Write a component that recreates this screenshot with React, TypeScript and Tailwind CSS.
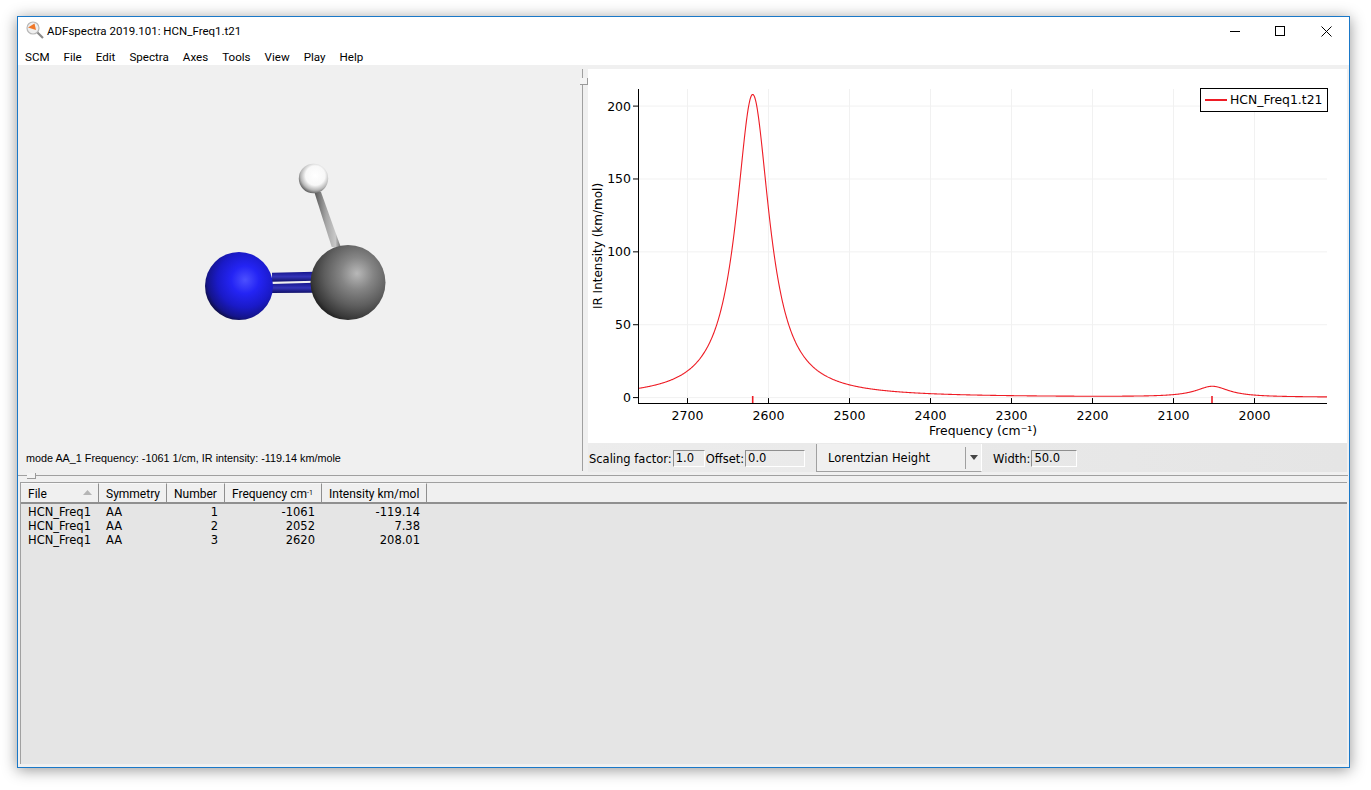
import React from "react";

const xOf = (f: number) => 687.5 + (2700 - f) * 0.81;
const yOf = (v: number) => 397.6 - v * 1.4575;
const lor = (f: number) => {
  const l = (c: number, h: number) => h / (1 + ((f - c) / 25) ** 2);
  return l(2619.5, 208.01) + l(2052, 7.38);
};
const curve = (() => {
  const pts: string[] = [];
  for (let px = 639; px <= 1327; px += 0.5) {
    const f = 2700 - (px - 687.5) / 0.81;
    pts.push(`${px},${yOf(lor(f)).toFixed(2)}`);
  }
  return "M" + pts.join("L");
})();

const xTicks = [2700, 2600, 2500, 2400, 2300, 2200, 2100, 2000];
const yTicks = [0, 50, 100, 150, 200];
// plot svg origin is at page (588, 69)
const ox = 588;
const oy = 69;

function Plot() {
  return (
    <svg width="759" height="374" className="block" style={{ fontFamily: '"DejaVu Sans", sans-serif' }}>
      {xTicks.map((t) => (
        <g key={t}>
          <line x1={xOf(t) - ox} x2={xOf(t) - ox} y1={89 - oy} y2={403 - oy} stroke="#f1f1f1" />
          <line x1={xOf(t) - ox} x2={xOf(t) - ox} y1={398 - oy} y2={403 - oy} stroke="#000" />
          <text x={xOf(t) - ox} y={420 - oy} fontSize="12.5" textAnchor="middle" fill="#000">{t}</text>
        </g>
      ))}
      {yTicks.map((t) => (
        <g key={t}>
          <line x1={638 - ox} x2={1327 - ox} y1={yOf(t) - oy} y2={yOf(t) - oy} stroke="#f1f1f1" />
          <line x1={633 - ox} x2={638 - ox} y1={yOf(t) - oy} y2={yOf(t) - oy} stroke="#000" />
          <text x={631 - ox} y={yOf(t) - oy + 4.5} fontSize="12.5" textAnchor="end" fill="#000">{t}</text>
        </g>
      ))}
      <line x1={638.5 - ox} x2={638.5 - ox} y1={89 - oy} y2={404 - oy} stroke="#000" />
      <line x1={638 - ox} x2={1327 - ox} y1={403.5 - oy} y2={403.5 - oy} stroke="#000" />
      <path d={curve} transform={`translate(${-ox} ${-oy})`} fill="none" stroke="#ee1c25" strokeWidth="1.1" />
      <line x1={752.7 - ox} x2={752.7 - ox} y1={396 - oy} y2={403 - oy} stroke="#ee1c25" strokeWidth="1.6" />
      <line x1={1212 - ox} x2={1212 - ox} y1={396 - oy} y2={403 - oy} stroke="#ee1c25" strokeWidth="1.6" />
      <text x={983 - ox} y={435 - oy} fontSize="12.4" textAnchor="middle" fill="#000">Frequency (cm⁻¹)</text>
      <text transform={`translate(${602 - ox} ${246 - oy}) rotate(-90)`} fontSize="12" textAnchor="middle" fill="#000">IR Intensity (km/mol)</text>
    </svg>
  );
}

function Molecule() {
  return (
    <svg width="230" height="190" className="block">
      <defs>
        <radialGradient id="gh" cx="0.56" cy="0.4" r="0.66">
          <stop offset="0" stopColor="#ffffff" />
          <stop offset="0.5" stopColor="#f8f8f8" />
          <stop offset="0.75" stopColor="#b8b8b8" />
          <stop offset="1" stopColor="#3c3c3c" />
        </radialGradient>
        <radialGradient id="gn" cx="0.59" cy="0.41" r="0.68">
          <stop offset="0" stopColor="#4c50ff" />
          <stop offset="0.3" stopColor="#2424f4" />
          <stop offset="0.6" stopColor="#1a1ac8" />
          <stop offset="0.82" stopColor="#14148a" />
          <stop offset="1" stopColor="#080810" />
        </radialGradient>
        <radialGradient id="gc" cx="0.62" cy="0.38" r="0.72">
          <stop offset="0" stopColor="#b8b8b8" />
          <stop offset="0.3" stopColor="#858585" />
          <stop offset="0.6" stopColor="#5e5e5e" />
          <stop offset="0.84" stopColor="#383838" />
          <stop offset="1" stopColor="#0c0c0c" />
        </radialGradient>
        <linearGradient id="gb" x1="0" y1="0" x2="1" y2="0">
          <stop offset="0" stopColor="#555555" />
          <stop offset="0.45" stopColor="#a6a6a6" />
          <stop offset="0.8" stopColor="#c8c8c8" />
          <stop offset="1" stopColor="#6a6a6a" />
        </linearGradient>
        <linearGradient id="gbl" x1="0" y1="0" x2="0" y2="1">
          <stop offset="0" stopColor="#14148c" />
          <stop offset="0.5" stopColor="#3434b8" />
          <stop offset="1" stopColor="#101068" />
        </linearGradient>
      </defs>
      {/* C-H bond */}
      <polygon points="134.3,42 141,42 160.7,97 151.7,97" fill="url(#gb)" />
      {/* double bond pair */}
      <polygon points="92,122.7 135,121.7 135,130.7 92,131.7" fill="url(#gbl)" />
      <polygon points="92,134 135,132.7 135,142.7 92,143" fill="url(#gbl)" />
      <circle cx="59" cy="136" r="34" fill="url(#gn)" />
      <circle cx="168" cy="132.5" r="37.5" fill="url(#gc)" />
      <circle cx="133.5" cy="28.5" r="14.7" fill="url(#gh)" />
    </svg>
  );
}

function Header({ w, children, sort }: { w: string; children: React.ReactNode; sort?: boolean }) {
  return (
    <div className={`${w} relative flex h-[19px] items-center border-r border-r-[#8f8f8f] border-t border-t-[#f8f8f8] bg-[#f0f0f0] pl-[7px] pt-[2px] text-[12px] text-black`}>
      {children}
      {sort && (
        <svg width="9" height="5" className="absolute right-[6px] top-[6px]">
          <polygon points="4.5,0 9,5 0,5" fill="#b5b5b5" />
        </svg>
      )}
    </div>
  );
}

const rows = [
  ["1", "-1061", "-119.14"],
  ["2", "2052", "7.38"],
  ["3", "2620", "208.01"],
];

const dejavu = { fontFamily: '"DejaVu Sans", sans-serif' };
const box = "ml-[1px] flex h-[17px] items-center border border-t-[#8f8f8f] border-l-[#8f8f8f] border-b-white border-r-white pl-[2px] pt-[2px]";

export default function App() {
  return (
    <div className="h-[790px] w-[1371px] overflow-hidden bg-white pl-[17px] pt-[16px]" style={{ fontFamily: 'Roboto, "Noto Sans", sans-serif' }}>
      <div className="flex h-[752px] w-[1333px] flex-col border border-[#1a78c8] bg-[#f0f0f0] shadow-[0_2px_14px_rgba(0,0,0,0.42)]">
        {/* title bar */}
        <div className="flex h-[28px] shrink-0 items-center bg-white">
          <svg width="20" height="20" viewBox="0 0 20 20" className="ml-[7px] mt-[-2px]">
            <circle cx="8" cy="8" r="6" fill="#efefef" stroke="#b8b8b8" strokeWidth="1.2" />
            <path d="M3 7.5 L9.5 3.5 L11 10 Z" fill="#f0782a" />
            <line x1="12.5" y1="12.5" x2="18" y2="18" stroke="#8a8a8a" strokeWidth="2.2" />
          </svg>
          <span className="ml-[2px] mt-[2px] text-[11.5px] text-black">ADFspectra 2019.101: HCN_Freq1.t21</span>
          <div className="ml-auto flex items-center">
            <svg width="11" height="11" className="mr-[34px]"><line x1="0" x2="10" y1="5.5" y2="5.5" stroke="#000" /></svg>
            <svg width="11" height="11" className="mr-[35px]"><rect x="0.5" y="0.5" width="9" height="9" fill="none" stroke="#000" /></svg>
            <svg width="11" height="11" className="mr-[17px]"><path d="M0.5 0.5L10.5 10.5M10.5 0.5L0.5 10.5" stroke="#000" /></svg>
          </div>
        </div>
        {/* menu */}
        <div className="flex h-[20px] shrink-0 items-center gap-[14px] bg-white pl-[7px] pt-[6px] text-[11.6px] text-black">
          {["SCM", "File", "Edit", "Spectra", "Axes", "Tools", "View", "Play", "Help"].map((m) => (
            <span key={m}>{m}</span>
          ))}
        </div>
        {/* top panes */}
        <div className="flex h-[409px] shrink-0">
          <div className="flex w-[564px] shrink-0 flex-col bg-[#f0f0f0]">
            <div className="ml-[162px] mt-[85px]"><Molecule /></div>
            <div className="mt-auto pb-[8px] pl-[8px] text-[10.8px] text-black" style={{ fontFamily: '"Liberation Sans", sans-serif' }}>
              mode AA_1 Frequency: -1061 1/cm, IR intensity: -119.14 km/mole
            </div>
          </div>
          {/* vertical splitter */}
          <div className="relative w-[6px] shrink-0 bg-[#f0f0f0]">
            <div className="mt-[4px] h-[402px] w-[1px] bg-[#a0a0a0]" />
            <div className="absolute left-[-2px] top-[13px] h-[7px] w-[8px] border-b border-r border-[#9a9a9a] bg-[#f4f4f4]" />
          </div>
          <div className="mt-[4px] flex w-[759px] shrink-0 flex-col">
            <div className="relative h-[374px] bg-white">
              <Plot />
              <div className="absolute left-[612px] top-[19px] flex h-[24px] w-[128px] items-center border border-black bg-white pl-[4px] text-[12.4px] text-black" style={dejavu}>
                <span className="mr-[3px] h-[1.5px] w-[22px] bg-[#ee1c25]" />
                HCN_Freq1.t21
              </div>
            </div>
            <div className="flex h-[29px] items-center bg-gradient-to-r from-[#ececec] to-[#e5e5e5] pt-[1px] text-[11.5px] text-black" style={dejavu}>
              <span className="ml-[1px] pt-[3px]">Scaling factor:</span>
              <div className={`${box} w-[32px]`}>1.0</div>
              <span className="ml-[1px] pt-[3px]">Offset:</span>
              <div className={`${box} w-[60px]`}>0.0</div>
              <div className="ml-[11px] mt-[-1px] flex h-[28px] w-[166px] items-center border-b border-l border-r border-b-[#a0a0a0] border-l-[#a0a0a0] border-r-white bg-[#f0f0f0] pl-[11px] pt-[4px]">
                Lorentzian Height
                <div className="ml-auto mt-[-3px] flex h-[22px] w-[16px] items-center justify-center border-l border-[#a0a0a0]">
                  <svg width="8" height="5"><polygon points="0,0 8,0 4,5" fill="#444" /></svg>
                </div>
              </div>
              <span className="ml-[11px] pt-[3px]">Width:</span>
              <div className={`${box} w-[46px]`}>50.0</div>
            </div>
          </div>
        </div>
        {/* horizontal splitter */}
        <div className="relative h-[8px] shrink-0 bg-[#f0f0f0]">
          <div className="mt-[1px] mr-[1px] h-[1px] bg-[#a0a0a0]" />
          <div className="absolute left-[9px] top-[-1px] h-[6px] w-[9px] border-b border-r border-[#9a9a9a] bg-[#f4f4f4]" />
        </div>
        {/* table */}
        <div className="mb-[3px] ml-[2px] mr-[2px] flex min-h-0 flex-1 flex-col border-l border-t border-[#a0a0a0] bg-[#e5e5e5]">
          <div className="flex shrink-0 border-b-2 border-[#8f8f8f] bg-[#f0f0f0]">
            <Header w="w-[78px]" sort>File</Header>
            <Header w="w-[68px]">Symmetry</Header>
            <Header w="w-[58px]">Number</Header>
            <Header w="w-[97px]"><span>Frequency cm<sup className="text-[7px]">-1</sup></span></Header>
            <Header w="w-[105px]">Intensity km/mol</Header>
          </div>
          <div className="pt-[1px] text-[11.5px] leading-[14px] text-black" style={dejavu}>
            {rows.map((r) => (
              <div key={r[0]} className="flex">
                <span className="w-[78px] pl-[7px]">HCN_Freq1</span>
                <span className="w-[68px] pl-[7px]">AA</span>
                <span className="w-[58px] pr-[7px] text-right">{r[0]}</span>
                <span className="w-[97px] pr-[7px] text-right">{r[1]}</span>
                <span className="w-[105px] pr-[7px] text-right">{r[2]}</span>
              </div>
            ))}
          </div>
        </div>
      </div>
    </div>
  );
}
